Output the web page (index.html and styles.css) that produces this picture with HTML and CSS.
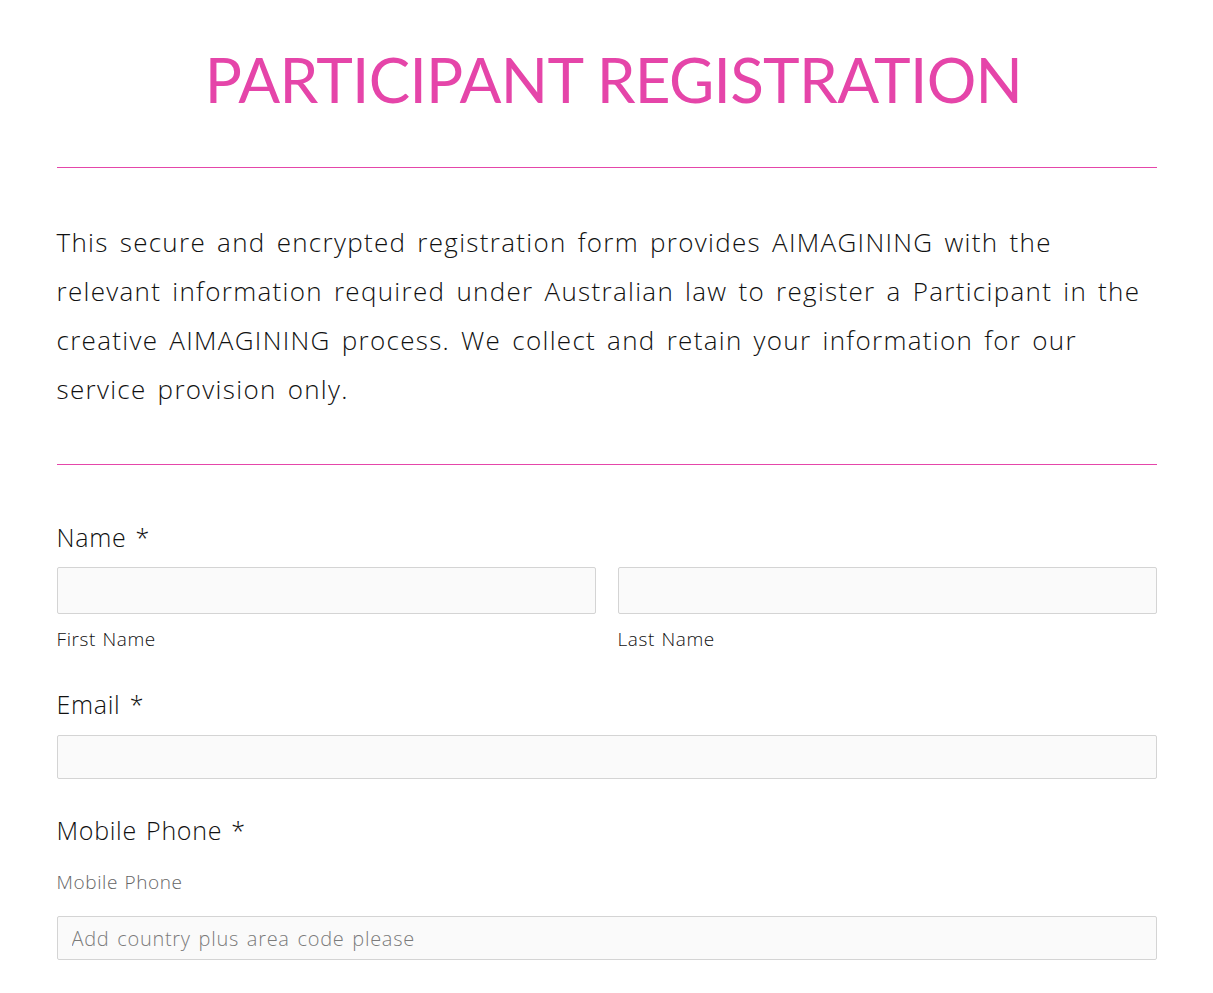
FILE: index.html
```html
<!DOCTYPE html>
<html lang="en">
<head>
<meta charset="utf-8">
<title>Participant Registration</title>
<link rel="stylesheet" href="styles.css">
</head>
<body>
<main class="page">
  <h1 class="title">PARTICIPANT REGISTRATION</h1>
  <div class="rule rule-top"></div>
  <p class="intro">This secure and encrypted registration form provides AIMAGINING with the relevant information required under Australian law to register a Participant in the creative AIMAGINING process. We collect and retain your information for our service provision only.</p>
  <div class="rule rule-bottom"></div>
  <form class="form">
    <div class="field">
      <div class="label">Name *</div>
      <div class="name-row">
        <div class="col">
          <input class="input input-tall" type="text">
          <span class="sub">First Name</span>
        </div>
        <div class="col">
          <input class="input input-tall" type="text">
          <span class="sub">Last Name</span>
        </div>
      </div>
    </div>
    <div class="field field-email">
      <div class="label">Email *</div>
      <input class="input" type="email">
    </div>
    <div class="field field-phone">
      <div class="label">Mobile Phone *</div>
      <div class="sub sub-gray">Mobile Phone</div>
      <input class="input" type="tel" placeholder="Add country plus area code please">
    </div>
  </form>
</main>
</body>
</html>
```
FILE: styles.css
```css
* { box-sizing: border-box; }
html, body { margin: 0; padding: 0; background: #ffffff; }
body {
  font-family: "Open Sans", "Liberation Sans", sans-serif;
  color: #111111;
}
.page {
  width: 1100px;
  margin: 0 auto;
  padding-top: 41px;
}
.title {
  margin: 0;
  padding-left: 14px;
  text-align: center;
  font-family: "Lato", "Open Sans", sans-serif;
  font-weight: 400;
  font-size: 62px;
  line-height: 76px;
  letter-spacing: -0.7px;
  color: #e545a9;
}
.rule {
  height: 1px;
  background: #e546aa;
}
.rule-top { margin-top: 50px; }
.rule-bottom { margin-top: 50px; }
.intro {
  margin: 50px 0 0;
  font-size: 26px;
  font-weight: 300;
  line-height: 49px;
  letter-spacing: 1.3px;
  word-spacing: 3px;
  color: #111111;
}
.form { padding-top: 56px; }
.label {
  font-size: 25px;
  font-weight: 300;
  line-height: 32px;
  letter-spacing: 0.7px;
  word-spacing: 2px;
  color: #111111;
}
.name-row {
  display: grid;
  grid-template-columns: 1fr 1fr;
  gap: 22px;
  margin-top: 14px;
}
.col { display: flex; flex-direction: column; }
.input {
  display: block;
  width: 100%;
  height: 44px;
  margin: 0;
  padding: 0 14px;
  border: 1px solid #d4d4d4;
  border-radius: 2px;
  background: #fafafa;
  font-family: "Open Sans", sans-serif;
  font-size: 20px;
  font-weight: 300;
  letter-spacing: 0.7px;
  word-spacing: 2px;
  color: #333;
}
.input-tall { height: 47px; }
.input::placeholder { color: #7a7a7a; }
.sub {
  display: block;
  margin-top: 12px;
  font-size: 19px;
  font-weight: 300;
  line-height: 26px;
  letter-spacing: 0.6px;
  word-spacing: 1px;
  color: #111111;
}
.field-email { margin-top: 36px; }
.field-email .input { margin-top: 15px; }
.field-phone { margin-top: 35px; }
.sub-gray { color: #666666; margin-top: 23px; }
.field-phone .input { margin-top: 21px; }
```
